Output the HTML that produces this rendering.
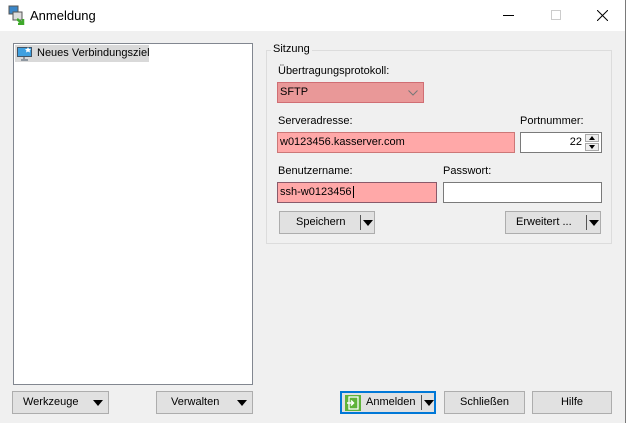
<!DOCTYPE html>
<html><head><meta charset="utf-8"><style>
*{box-sizing:border-box;margin:0;padding:0}
body{width:626px;height:423px;overflow:hidden;background:#f0f0f0;font-family:"Liberation Sans",sans-serif;font-size:11px;color:#000;position:relative}
.a{position:absolute}
.win{position:absolute;left:0;top:0;width:626px;height:423px;border:1px solid #7a7a7a;border-left:none;border-bottom:none}
.title{position:absolute;left:0;top:0;width:625px;height:31px;background:#fff}
.inp{position:absolute;border:1px solid #7a7a7a;background:#fff;height:21px;padding:3px 2px;font-size:11px;line-height:13px}
.red{background:#ffa8a8;border-color:#c77}
.btn{position:absolute;height:23px;background:#e1e1e1;border:1px solid #adadad;text-align:center;line-height:21px;font-size:11px}
.tri{position:absolute;width:0;height:0;border-left:5px solid transparent;border-right:5px solid transparent;border-top:6px solid #000}
.sep{position:absolute;width:1px;background:#555;top:3px;height:15px}
</style></head><body>
<div class="win"></div>
<div class="title">
 <svg class="a" style="left:8px;top:5px" width="18" height="20" viewBox="0 0 18 20">
  <rect x="1" y="1" width="9" height="8" fill="#3a86c8" stroke="#555"/>
  <rect x="5" y="7" width="9" height="8" fill="#ddd" stroke="#555"/>
  <path d="M9 14 l6 5 M15 14 v5 h-5" stroke="#3ea82a" stroke-width="2.5" fill="none"/>
 </svg>
 <div class="a" style="left:30px;top:8px;font-size:13px">Anmeldung</div>
 <div class="a" style="left:503px;top:15px;width:11px;height:1px;background:#000"></div>
 <div class="a" style="left:551px;top:10px;width:10px;height:10px;border:1px solid #ccc"></div>
 <svg class="a" style="left:597px;top:10px" width="11" height="11"><path d="M0 0L11 11M11 0L0 11" stroke="#000" stroke-width="1"/></svg>
</div>
<div class="a" style="left:13px;top:43px;width:240px;height:342px;background:#fff;border:1px solid #828790"></div>
<div class="a" style="left:15px;top:45px;width:134px;height:17px;background:#d9d9d9"></div>
<svg class="a" style="left:17px;top:46px" width="16" height="15" viewBox="0 0 16 15"><rect x="0.5" y="1.5" width="14" height="9" fill="#3fa0e0" stroke="#456"/><path d="M7 11v2M4 14h7" stroke="#456"/><path d="M11 1l1 2 2 0-1.5 1.5.5 2-2-1-2 1 .5-2L8 3h2z" fill="#fff"/></svg>
<div class="a" style="left:37px;top:47px">Neues Verbindungsziel</div>

<div class="a" style="left:266px;top:50px;width:346px;height:194px;border:1px solid #dcdcdc"></div>
<div class="a" style="left:271px;top:43px;background:#f0f0f0;padding:0 2px">Sitzung</div>
<div class="a" style="left:278px;top:65px">Übertragungsprotokoll:</div>
<div class="inp" style="left:277px;top:82px;width:147px;background:#e99898;border-color:#d06e74">SFTP</div>
<svg class="a" style="left:408px;top:90px" width="10" height="6"><path d="M0.5 0.5L5 5 9.5 0.5" stroke="#777" fill="none"/></svg>
<div class="a" style="left:278px;top:115px">Serveradresse:</div>
<div class="inp red" style="left:277px;top:132px;width:238px">w0123456.kasserver.com</div>
<div class="a" style="left:520px;top:115px">Portnummer:</div>
<div class="inp" style="left:520px;top:132px;width:82px;text-align:right;padding-right:19px">22</div>
<div class="a" style="left:585px;top:134px;width:14px;height:8px;border:1px solid #aaa;background:#eee"></div>
<div class="a" style="left:585px;top:143px;width:14px;height:8px;border:1px solid #aaa;background:#eee"></div>
<div class="a" style="left:589px;top:136px;border-left:3px solid transparent;border-right:3px solid transparent;border-bottom:4px solid #000"></div>
<div class="a" style="left:589px;top:145px;border-left:3px solid transparent;border-right:3px solid transparent;border-top:4px solid #000"></div>
<div class="a" style="left:278px;top:165px">Benutzername:</div>
<div class="inp red" style="left:277px;top:182px;width:160px;border-color:#8a5a6a">ssh-w0123456<span style="border-left:1px solid #000;margin-left:1px"></span></div>
<div class="a" style="left:443px;top:165px">Passwort:</div>
<div class="inp" style="left:443px;top:182px;width:159px"></div>
<div class="btn" style="left:279px;top:211px;width:96px"><span style="position:absolute;left:16px">Speichern</span><div class="sep" style="left:80px"></div><div class="tri" style="left:83px;top:8px"></div></div>
<div class="btn" style="left:505px;top:211px;width:96px"><span style="position:absolute;left:10px">Erweitert ...</span><div class="sep" style="left:80px"></div><div class="tri" style="left:83px;top:8px"></div></div>

<div class="btn" style="left:12px;top:391px;width:97px"><span style="position:absolute;left:10px">Werkzeuge</span><div class="tri" style="left:80px;top:8px"></div></div>
<div class="btn" style="left:156px;top:391px;width:97px"><span style="position:absolute;left:14px">Verwalten</span><div class="tri" style="left:80px;top:8px"></div></div>
<div class="btn" style="left:340px;top:391px;width:96px;border:2px solid #0078d7;line-height:19px">
 <svg class="a" style="left:3px;top:2px" width="16" height="16" viewBox="0 0 16 16"><rect width="16" height="16" fill="#5fb33a"/><rect x="4" y="2" width="9" height="12" fill="none" stroke="#fff" stroke-width="1.3"/><path d="M2 8h6M6 5.5L8.5 8 6 10.5" stroke="#fff" stroke-width="1.5" fill="none"/></svg>
 <span style="position:absolute;left:24px">Anmelden</span><div class="sep" style="left:79px;top:2px"></div><div class="tri" style="left:82px;top:7px"></div></div>
<div class="btn" style="left:444px;top:391px;width:81px">Schließen</div>
<div class="btn" style="left:532px;top:391px;width:80px">Hilfe</div>
</body></html>
